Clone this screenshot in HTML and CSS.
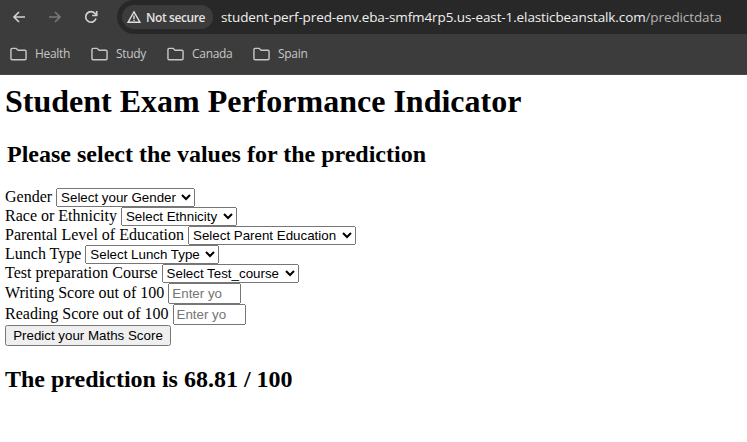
FILE: index.html
```html
<!DOCTYPE html>
<html lang="en">
<head>
<meta charset="utf-8">
<title>Student Exam Performance Indicator</title>
<link rel="stylesheet" href="styles.css">
</head>
<body>
<header class="chrome">
  <div class="toolbar">
    <svg class="nav back" viewBox="0 0 16 16"><path d="M14 8H3M8 3L3 8l5 5"/></svg>
    <svg class="nav forward" viewBox="0 0 16 16"><path d="M2 8h11M8 3l5 5-5 5"/></svg>
    <svg class="nav reload" viewBox="0 0 16 16"><path d="M13 9.600A5.300 5.300 0 1 1 12 4.500L13.500 6M13.700 2V6.500H9.200"/></svg>
    <div class="address">
      <span class="chip"><svg class="warn" viewBox="0 0 14 14"><path d="M7 1.8L13 12.300H1z"/><path d="M7 5.500v3.400M7 9.800v1.200"/></svg><span class="label">Not secure</span></span>
      <span class="url">student-perf-pred-env.eba-smfm4rp5.us-east-1.elasticbeanstalk.com<span class="path">/predictdata</span></span>
    </div>
  </div>
  <nav class="bookmarks">
    <span class="bm b1"><svg viewBox="0 0 18 14"><path d="M1 2.200Q1 1 2.200 1H6.500l2 2h7.300Q17 3 17 4.200v7.600Q17 13 15.800 13H2.200Q1 13 1 11.800z"/></svg>Health</span>
    <span class="bm b2"><svg viewBox="0 0 18 14"><path d="M1 2.200Q1 1 2.200 1H6.500l2 2h7.300Q17 3 17 4.200v7.600Q17 13 15.800 13H2.200Q1 13 1 11.800z"/></svg>Study</span>
    <span class="bm b3"><svg viewBox="0 0 18 14"><path d="M1 2.200Q1 1 2.200 1H6.500l2 2h7.300Q17 3 17 4.200v7.600Q17 13 15.800 13H2.200Q1 13 1 11.800z"/></svg>Canada</span>
    <span class="bm"><svg viewBox="0 0 18 14"><path d="M1 2.200Q1 1 2.200 1H6.500l2 2h7.300Q17 3 17 4.200v7.600Q17 13 15.800 13H2.200Q1 13 1 11.800z"/></svg>Spain</span>
  </nav>
</header>
<main>
  <h1>Student Exam Performance Indicator</h1>
  <h2 class="lead">Please select the values for the prediction</h2>
  <form>
    <div class="row"><label>Gender</label><select class="w139"><option>Select your Gender</option></select></div>
    <div class="row"><label>Race or Ethnicity</label><select class="w116"><option>Select Ethnicity</option></select></div>
    <div class="row"><label>Parental Level of Education</label><select class="w168"><option>Select Parent Education</option></select></div>
    <div class="row"><label>Lunch Type</label><select class="w134"><option>Select Lunch Type</option></select></div>
    <div class="row"><label>Test preparation Course</label><select class="w137"><option>Select Test_course</option></select></div>
    <div class="row tall"><label>Writing Score out of 100</label><input placeholder="Enter yo"></div>
    <div class="row tall"><label>Reading Score out of 100</label><input placeholder="Enter yo"></div>
    <button type="button">Predict your Maths Score</button>
  </form>
  <h2 class="result">The prediction is 68.81 / 100</h2>
</main>
</body>
</html>
```
FILE: styles.css
```css
* { box-sizing: border-box; }
body { margin: 0; background: #fff; height: 442px; overflow: hidden; color: #000; font-family: "Liberation Serif", serif; font-size: 16px; }
.chrome { height: 75px; background: #3c3c3c; color: #c7c7c7; border-bottom: 1px solid #474747; }
.toolbar { height: 34px; display: flex; align-items: center; padding-left: 11px; }
.nav { width: 16px; height: 16px; fill: none; stroke: #d0d0d0; stroke-width: 1.7; margin-right: 20px; flex: none; }
.forward { stroke: #777; }
.reload { margin-right: 18px; }
.address { flex: 1; height: 34px; background: #282828; border-radius: 17px 0 0 17px; display: flex; align-items: center; padding-left: 5px; white-space: nowrap; overflow: hidden; }
.chip { width: 91px; height: 24px; border-radius: 12px; background: #3c3c3c; display: flex; align-items: center; padding-left: 5px; gap: 5px; font: 600 12px "Open Sans", sans-serif; letter-spacing: -0.4px; color: #e3e3e3; flex: none; }
.warn { width: 14px; height: 14px; fill: none; stroke: #dedede; stroke-width: 1.4; flex: none; }
.url { margin: 0 0 1px 8px; font: 13.5px "Open Sans", sans-serif; letter-spacing: -0.11px; color: #f0f0f0; }
.path { color: #b5b5b5; }
.bookmarks { height: 40px; display: flex; align-items: center; padding-left: 10px; font: 12px "Open Sans", sans-serif; letter-spacing: -0.3px; }
.bm { display: flex; align-items: center; gap: 8px; padding-bottom: 1px; }
.b1 { width: 81px; }
.b2 { width: 76px; }
.b3 { width: 86px; }
.bm svg { width: 17px; height: 14px; fill: none; stroke: #c7c7c7; stroke-width: 1.5; }
main { padding-left: 5px; }
h1 { font-size: 32px; line-height: 37px; margin: 8px 0 0; }
h2 { font-size: 24px; line-height: 27px; margin: 0; }
.lead { margin: 21px 0 20px 2px; }
.row { height: 19px; display: flex; align-items: center; gap: 4px; white-space: nowrap; }
.row label { line-height: 18px; margin-bottom: 1px; }
.tall { height: 21px; }
select, input, button { font-family: "Liberation Sans", sans-serif; font-size: 13.333px; margin: 0; }
select { height: 19px; }
input { width: 73px; height: 21px; }
.w139 { width: 139px; }
.w116 { width: 116px; }
.w168 { width: 168px; }
.w134 { width: 134px; }
.w137 { width: 137px; }
button { display: block; width: 166px; height: 21px; padding: 0; }
.result { margin-top: 20px; }
```
